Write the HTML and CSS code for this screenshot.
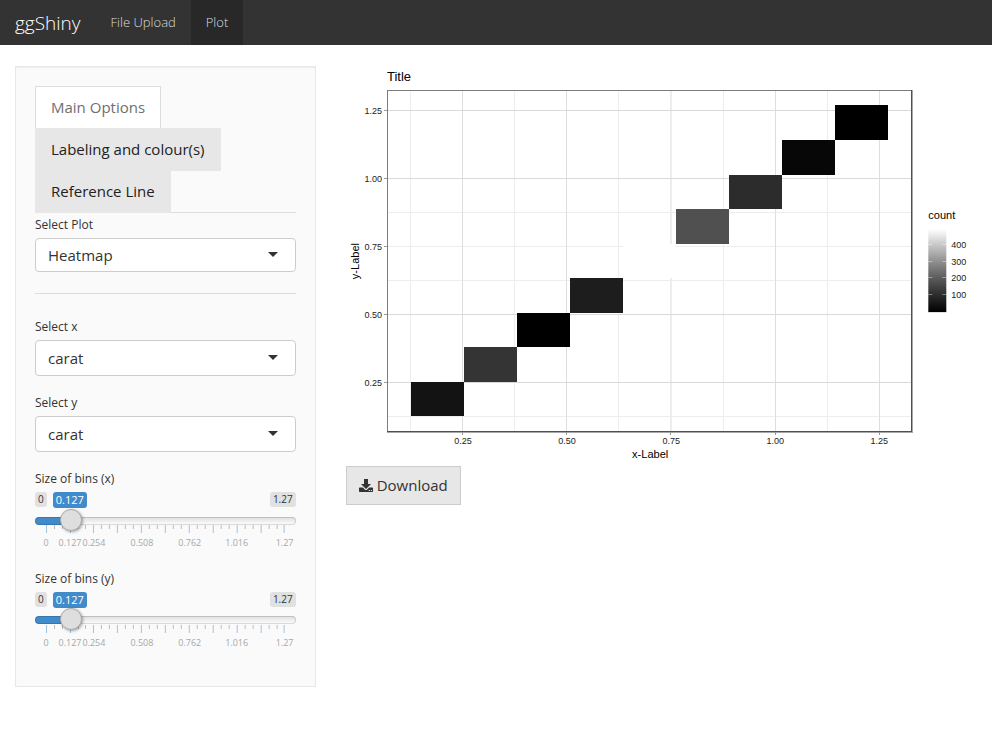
FILE: index.html
```html
<!DOCTYPE html>
<html lang="en">
<head>
<meta charset="utf-8">
<meta name="viewport" content="width=device-width, initial-scale=1">
<title>ggShiny</title>
<link rel="stylesheet" href="styles.css">
</head>
<body>
<nav class="navbar">
  <a class="brand" href="#">ggShiny</a>
  <a class="nav-link" href="#upload">File Upload</a>
  <a class="nav-link active" href="#plot">Plot</a>
</nav>
<main class="row">
  <div class="col-side">
    <form class="well">
      <ul class="tabs">
        <li><a class="tab active" href="#main">Main Options</a></li>
        <li><a class="tab" href="#labels">Labeling and colour(s)</a></li>
        <li><a class="tab" href="#reference">Reference Line</a></li>
      </ul>
      <label class="label" for="plot-type">Select Plot</label>
      <div class="select select-plot">
        <select id="plot-type"><option>Heatmap</option></select>
      </div>
      <hr class="divider">
      <div class="group">
        <label class="label" for="var-x">Select x</label>
        <div class="select"><select id="var-x"><option>carat</option></select></div>
      </div>
      <div class="group">
        <label class="label" for="var-y">Select y</label>
        <div class="select"><select id="var-y"><option>carat</option></select></div>
      </div>
      <div class="group">
        <label class="label" for="bins-x">Size of bins (x)</label>
        <div class="slider-head"><span class="limit">0</span><output class="value" for="bins-x">0.127</output><span class="limit limit-max">1.27</span></div>
        <input class="range" id="bins-x" type="range" min="0" max="1.27" step="0.001" value="0.127">
        <svg class="ticks" viewBox="0 0 261 27">
          <path class="tick-small" d="M19.5 0v4M27.5 0v4M43.5 0v4M50.5 0v4M66.5 0v4M74.5 0v4M90.5 0v4M98.5 0v4M114.5 0v4M122.5 0v4M138.5 0v4M146.5 0v4M162.5 0v4M170.5 0v4M186.5 0v4M194.5 0v4M210.5 0v4M218.5 0v4M234.5 0v4M242.5 0v4"/>
          <path class="tick-big" d="M11.5 0v8M35.5 0v8M58.5 0v8M82.5 0v8M106.5 0v8M130.5 0v8M154.5 0v8M178.5 0v8M202.5 0v8M226.5 0v8M249.5 0v8"/>
          <g class="tick-text"><text x="11" y="21">0</text><text x="35" y="21">0.127</text><text x="59" y="21">0.254</text><text x="107" y="21">0.508</text><text x="155" y="21">0.762</text><text x="202" y="21">1.016</text><text x="250" y="21">1.27</text></g>
        </svg>
      </div>
      <div class="group">
        <label class="label" for="bins-y">Size of bins (y)</label>
        <div class="slider-head"><span class="limit">0</span><output class="value" for="bins-y">0.127</output><span class="limit limit-max">1.27</span></div>
        <input class="range" id="bins-y" type="range" min="0" max="1.27" step="0.001" value="0.127">
        <svg class="ticks" viewBox="0 0 261 27">
          <path class="tick-small" d="M19.5 0v4M27.5 0v4M43.5 0v4M50.5 0v4M66.5 0v4M74.5 0v4M90.5 0v4M98.5 0v4M114.5 0v4M122.5 0v4M138.5 0v4M146.5 0v4M162.5 0v4M170.5 0v4M186.5 0v4M194.5 0v4M210.5 0v4M218.5 0v4M234.5 0v4M242.5 0v4"/>
          <path class="tick-big" d="M11.5 0v8M35.5 0v8M58.5 0v8M82.5 0v8M106.5 0v8M130.5 0v8M154.5 0v8M178.5 0v8M202.5 0v8M226.5 0v8M249.5 0v8"/>
          <g class="tick-text"><text x="11" y="21">0</text><text x="35" y="21">0.127</text><text x="59" y="21">0.254</text><text x="107" y="21">0.508</text><text x="155" y="21">0.762</text><text x="202" y="21">1.016</text><text x="250" y="21">1.27</text></g>
        </svg>
      </div>
    </form>
  </div>
  <div class="col-main">
    <svg class="chart" viewBox="0 0 631 400" role="img" aria-label="Heatmap of carat against carat">
      <defs>
        <linearGradient id="scale" x1="0" y1="0" x2="0" y2="1">
          <stop offset="0" stop-color="#fff"/><stop offset="0.2" stop-color="#c5c5c5"/><stop offset="0.4" stop-color="#8d8d8d"/><stop offset="0.6" stop-color="#595959"/><stop offset="0.8" stop-color="#2b2b2b"/><stop offset="1" stop-color="#000"/>
        </linearGradient>
      </defs>
      <g shape-rendering="crispEdges">
        <path class="grid-minor" d="M64.5 25v341M168.5 25v341M272.5 25v341M377.5 25v341M481.5 25v341M42 146.5h524M42 214.5h524M42 350.5h524M42 180.5h524"/>
        <path class="grid-major-x" d="M116.5 25v341M220.5 25v341M429.5 25v341M533.5 25v341"/>
        <path class="grid-wide" d="M325 25v341"/>
        <path class="grid-major-y" d="M42 44.5h524M42 112.5h524M42 248.5h524M42 316.5h524"/>
        <rect x="65" y="316" width="53" height="34" fill="#131313"/>
        <rect x="118" y="281" width="53" height="35" fill="#343434"/>
        <rect x="171" y="247" width="53" height="34" fill="#000"/>
        <rect x="224" y="212" width="53" height="35" fill="#1d1d1d"/>
        <rect x="277" y="178" width="53" height="34" fill="#fff"/>
        <rect x="330" y="143" width="53" height="35" fill="#505050"/>
        <rect x="383" y="109" width="53" height="34" fill="#2c2c2c"/>
        <rect x="436" y="74" width="53" height="35" fill="#070707"/>
        <rect x="489" y="39" width="53" height="35" fill="#000"/>
        <path class="frame-light" d="M41 24.5h525M41.5 24v342"/>
        <path class="frame-soft" d="M41 366.5h526M566.5 24v342"/>
        <path class="frame-dark" d="M41 365.5h525M565.5 24v342"/>
        <path class="axis-tick" d="M38 44.5h3M38 112.5h3M38 180.5h3M38 248.5h3M38 316.5h3M116.5 366v3M220.5 366v3M324.5 366v3M429.5 366v3M533.5 366v3"/>
      </g>
      <text class="title" x="41" y="15">Title</text>
      <g class="axis-text axis-y"><text x="36" y="48">1.25</text><text x="36" y="116">1.00</text><text x="36" y="184">0.75</text><text x="36" y="252">0.50</text><text x="36" y="320">0.25</text></g>
      <g class="axis-text axis-x"><text x="117" y="378">0.25</text><text x="221" y="378">0.50</text><text x="325" y="378">0.75</text><text x="429" y="378">1.00</text><text x="533" y="378">1.25</text></g>
      <text class="axis-title" x="304" y="392">x-Label</text>
      <text class="axis-title" transform="translate(13 195) rotate(-90)">y-Label</text>
      <text class="legend-title" x="582" y="153">count</text>
      <rect x="582" y="163" width="18" height="83" fill="url(#scale)"/>
      <path class="legend-tick" d="M582 178.5h4M596 178.5h4M582 195.5h4M596 195.5h4M582 211.5h4M596 211.5h4M582 228.5h4M596 228.5h4"/>
      <g class="axis-text"><text x="605" y="182">400</text><text x="605" y="199">300</text><text x="605" y="215">200</text><text x="605" y="232">100</text></g>
    </svg>
    <button class="download" type="button">
      <svg class="icon" viewBox="0 0 14 14" aria-hidden="true"><path fill="currentColor" fill-rule="evenodd" d="M5 0h4v5h3L7 10 2 5h3zM.7 8.500h3.100l2 2q1.200 1 2.400 0l2-2h3.100q.7 0 .7.700v3.100q0 .7-.7.700H.7q-.7 0-.7-.7V9.200q0-.7.7-.7zM9.700 11h1.200v1H9.700zM11.800 11H13v1h-1.200z"/></svg>
      Download
    </button>
  </div>
</main>
</body>
</html>
```
FILE: styles.css
```css
* { box-sizing: border-box; }

body {
  margin: 0;
  background: #fff;
  color: #333;
  font: 15px/21px "Open Sans", "Liberation Sans", sans-serif;
}

a { text-decoration: none; }

.navbar {
  display: flex;
  height: 45px;
  margin-bottom: 21px;
  background: #333;
}

.brand,
.nav-link {
  padding: 0 15px;
  color: #ddd;
  font-weight: 300;
  line-height: 45px;
}

.brand {
  color: #fff;
  font-size: 19px;
  line-height: 47px;
}

.nav-link { font-size: 13px; }
.nav-link.active { background: #282828; }

.row { display: flex; }

.col-side {
  width: 33.3333%;
  padding: 0 15px;
}

.col-main {
  width: 66.6667%;
  padding: 0 15px;
}

.well {
  padding: 19px;
  background: #fafafa;
  border: 1px solid #e8e8e8;
  box-shadow: inset 0 1px 1px rgba(0, 0, 0, 0.05);
}

.tabs {
  display: flex;
  flex-direction: column;
  align-items: flex-start;
  margin: 0;
  padding: 0;
  list-style: none;
  border-bottom: 1px solid #ddd;
}

.tabs li { margin-bottom: -1px; }

.tab {
  display: block;
  padding: 10px 15px;
  background: #e7e7e7;
  border: 1px solid #e7e7e7;
  color: #222;
}

.tab.active {
  background: #fff;
  border-color: #ddd;
  border-bottom-color: transparent;
  color: #6f6f6f;
}

.label {
  display: block;
  margin-bottom: 1px;
  font-size: 12px;
  line-height: 24px;
}

.select {
  position: relative;
  height: 36px;
}

.select-plot { height: 34px; }

.select select {
  width: 100%;
  height: 100%;
  padding: 0 12px;
  appearance: none;
  background: #fff;
  border: 1px solid #ccc;
  border-radius: 4px;
  color: #333;
  font: inherit;
}

.select::after {
  content: "";
  position: absolute;
  top: 50%;
  right: 18px;
  margin-top: -3px;
  border: 5px solid transparent;
  border-top-color: #333;
  border-bottom: 0;
  pointer-events: none;
}

.divider {
  margin: 21px 0;
  border: 0;
  border-top: 1px solid #ddd;
}

.group { margin-bottom: 15px; }

.slider-head {
  display: flex;
  align-items: flex-start;
  gap: 6px;
  height: 17px;
}

.limit,
.value {
  padding: 0 3px;
  border-radius: 3px;
  line-height: 15px;
}

.limit {
  background: #e1e1e1;
  font-size: 10px;
}

.limit-max { margin-left: auto; }

.value {
  background: #428bca;
  color: #fff;
  font-size: 11px;
  line-height: 16px;
}

.range {
  position: relative;
  z-index: 1;
  display: block;
  width: 100%;
  height: 22px;
  margin: 0;
  appearance: none;
  background: transparent;
}

.range::-webkit-slider-runnable-track {
  height: 8px;
  margin-top: 1px;
  border: 1px solid #ccc;
  border-radius: 8px;
  background: linear-gradient(#428bca, #428bca) 0 0 / 12% 100% no-repeat border-box, linear-gradient(#ddd, #fff);
  background-origin: border-box;
  border-color: rgba(0, 0, 0, 0.14);
}

.range::-webkit-slider-thumb {
  width: 22px;
  height: 22px;
  margin-top: -9px;
  appearance: none;
  background: #dedede;
  border: 1px solid #ababab;
  border-radius: 50%;
  box-shadow: 1px 1px 3px rgba(0, 0, 0, 0.35);
}

.ticks {
  display: block;
  width: 100%;
  margin-top: -6px;
  overflow: visible;
}

.tick-small { stroke: #bbb; }
.tick-big { stroke: #9cc3e4; }

.tick-text {
  fill: #a3a8ac;
  font-size: 9px;
  text-anchor: middle;
}

.chart {
  display: block;
  width: 100%;
  font-family: "Liberation Sans", Arial, sans-serif;
}

.chart path { fill: none; }
.grid-minor { stroke: #ededed; }
.grid-major-x { stroke: #dedede; }
.grid-major-y { stroke: #d9d9d9; }
.grid-wide { stroke: #ededed; stroke-width: 2px; }
.frame-light { stroke: #7d7d7d; }
.frame-dark { stroke: #505050; }
.frame-soft { stroke: #a8a8a8; }
.axis-tick { stroke: #999; }
.legend-tick { stroke: #fff; stroke-opacity: 0.4; }
.title { font-size: 13px; }

.axis-title,
.legend-title { font-size: 11px; }

.axis-title { text-anchor: middle; }

.axis-text {
  fill: #222;
  font-size: 9px;
}

.axis-x { text-anchor: middle; }
.axis-y { text-anchor: end; }

.download {
  display: inline-flex;
  align-items: center;
  gap: 4px;
  padding: 8px 12px;
  background: #e7e7e7;
  border: 1px solid #ccc;
  color: #333;
  font: inherit;
}

.icon {
  width: 14px;
  height: 14px;
}
```
